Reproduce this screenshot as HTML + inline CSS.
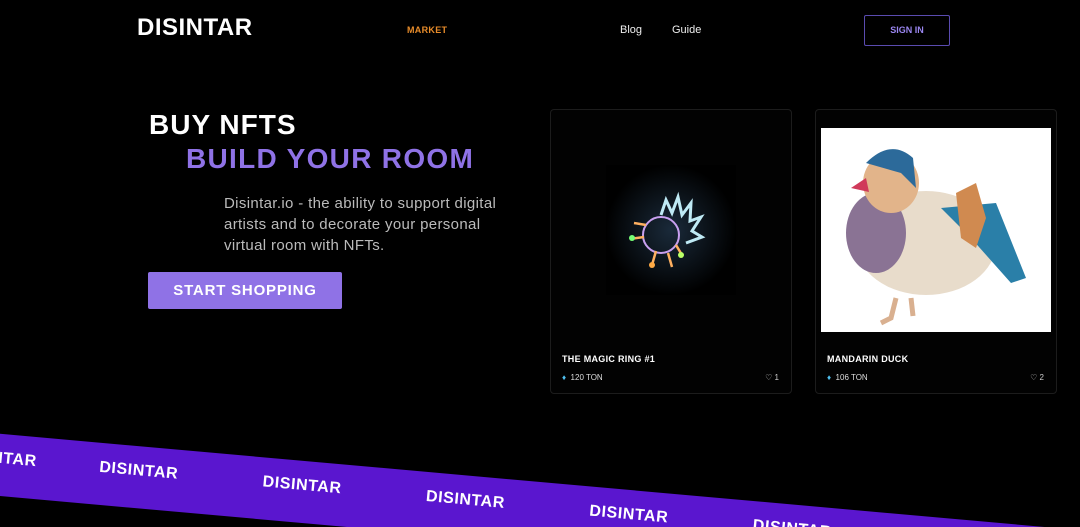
<!DOCTYPE html>
<html><head><meta charset="utf-8"><style>
*{margin:0;padding:0;box-sizing:border-box}
html,body{width:1080px;height:527px;overflow:hidden}
body{background:#000;position:relative;font-family:"Liberation Sans",sans-serif;color:#fff}
.a{position:absolute;white-space:nowrap}
.card{position:absolute;top:109px;width:242px;height:285px;border:1px solid #1c1c1c;border-radius:4px;background:#020202}
.t{position:absolute;left:11px;top:244px;font-size:9px;font-weight:bold;letter-spacing:.3px}
.p{position:absolute;left:11px;top:263px;font-size:8px;color:#ddd}
.l{position:absolute;right:12px;top:263px;font-size:8px;color:#ccc}
.clip{position:absolute;left:0;top:0;width:1080px;height:527px;overflow:hidden}
.band{position:absolute;left:-20px;top:432px;width:1300px;height:62px;background:#5a16cf;transform:rotate(5.1deg);transform-origin:0 0}
.band span{position:absolute;top:16px;font-size:16px;font-weight:bold;color:#fff;letter-spacing:.6px}
</style></head><body>
<div class="a" style="left:137px;top:14px;font-size:24px;font-weight:bold;letter-spacing:.5px">DISINTAR</div>
<div class="a" style="left:407px;top:25px;font-size:9px;font-weight:bold;color:#e88c2a;letter-spacing:.3px">MARKET</div>
<div class="a" style="left:620px;top:24px;font-size:11px;color:#eee">Blog</div>
<div class="a" style="left:672px;top:24px;font-size:11px;color:#eee">Guide</div>
<div class="a" style="left:864px;top:15px;width:86px;height:31px;border:1px solid #5a4bb0;border-radius:2px;font-size:9px;font-weight:bold;color:#9a86f0;text-align:center;line-height:29px">SIGN IN</div>
<div class="a" style="left:149px;top:109px;font-size:28px;font-weight:bold;letter-spacing:1px">BUY NFTS</div>
<div class="a" style="left:186px;top:143px;font-size:28px;font-weight:bold;color:#8f72e6;letter-spacing:1.3px">BUILD YOUR ROOM</div>
<div class="a" style="left:224px;top:193px;font-size:15px;line-height:21px;color:#bbb;white-space:normal;width:285px;letter-spacing:.35px">Disintar.io - the ability to support digital artists and to decorate your personal virtual room with NFTs.</div>
<div class="a" style="left:148px;top:272px;width:194px;height:37px;background:#8f72e6;border-radius:2px;font-size:15px;font-weight:bold;text-align:center;line-height:37px;letter-spacing:.8px">START SHOPPING</div>
<div class="card" style="left:550px">
<svg style="position:absolute;left:55px;top:55px" width="130" height="130" viewBox="0 0 130 130">
<defs><radialGradient id="g"><stop offset="0" stop-color="#1a2a3a"/><stop offset="1" stop-color="#000"/></radialGradient></defs>
<rect width="130" height="130" fill="url(#g)"/>
<circle cx="55" cy="70" r="18" fill="none" stroke="#c9a0f0" stroke-width="2"/>
<path d="M55 50 L60 35 L66 48 L72 32 L76 50 L85 38 L84 56 L95 52 L86 66 L96 72 L80 78" fill="none" stroke="#bfeaf5" stroke-width="3"/>
<path d="M40 60 L28 58 M38 72 L24 74 M50 86 L46 100 M62 88 L66 102 M70 80 L76 90" stroke="#ffb060" stroke-width="2.5"/>
<circle cx="26" cy="73" r="3" fill="#7f7"/><circle cx="75" cy="90" r="3" fill="#bf6"/><circle cx="46" cy="100" r="3" fill="#fa4"/>
</svg>
<div class="t">THE MAGIC RING #1</div>
<div class="p"><span style="color:#4fc0f0">♦</span>&nbsp; 120 TON</div>
<div class="l">♡ 1</div>
</div>
<div class="card" style="left:815px">
<svg style="position:absolute;left:5px;top:18px" width="230" height="204" viewBox="0 0 230 204">
<rect width="230" height="204" fill="#fff"/>
<ellipse cx="105" cy="115" rx="70" ry="52" fill="#e8dccb"/>
<ellipse cx="55" cy="105" rx="30" ry="40" fill="#8a7394"/>
<path d="M120 80 L175 75 L205 150 L190 155 L150 110Z" fill="#2a7fa8"/>
<path d="M135 65 L155 55 L165 90 L155 120 L140 110Z" fill="#d08a50"/>
<ellipse cx="70" cy="55" rx="28" ry="30" fill="#e2b48a"/>
<path d="M45 35 Q70 10 92 30 L95 60 L80 45Z" fill="#2c6a9a"/>
<path d="M30 60 L45 50 L48 64Z" fill="#d03a5a"/>
<path d="M75 170 L70 190 L60 195 M90 170 L92 188" stroke="#d9b090" stroke-width="5" fill="none"/>
</svg>
<div class="t">MANDARIN DUCK</div>
<div class="p"><span style="color:#4fc0f0">♦</span>&nbsp; 106 TON</div>
<div class="l">♡ 2</div>
</div>
<div class="clip">
<div class="band">
<span style="left:-20px">DISINTAR</span>
<span style="left:122px">DISINTAR</span>
<span style="left:286px">DISINTAR</span>
<span style="left:450px">DISINTAR</span>
<span style="left:614px">DISINTAR</span>
<span style="left:778px">DISINTAR</span>
<span style="left:942px">DISINTAR</span>
</div>
</div>
</body></html>
